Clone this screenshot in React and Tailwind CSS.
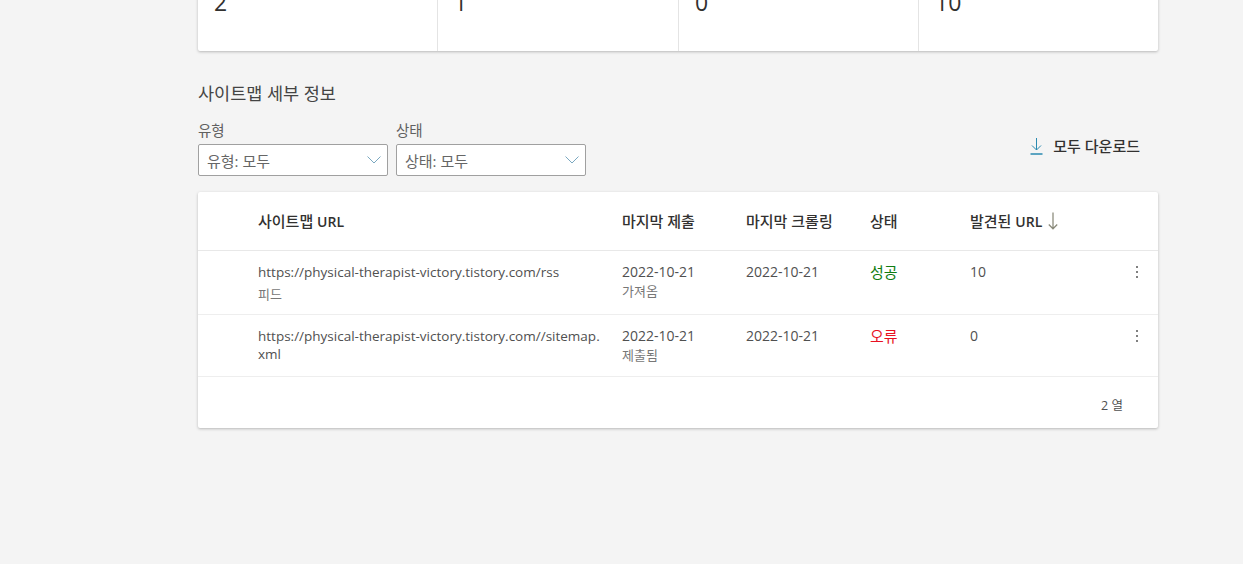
const FONT = "font-['Open_Sans','Noto_Sans_CJK_KR',sans-serif]";

const stats = ['2', '1', '0', '10'];

const rows = [
  { id: 'rss', url: 'https://physical-therapist-victory.tistory.com/rss', sub: '피드', submitted: '2022-10-21', note: '가져옴', crawled: '2022-10-21', status: '성공', color: 'text-[#107c10]', found: '10', h: 'h-[64px]' },
  { id: 'sitemap', url: <>https://physical-therapist-victory.tistory.com//sitemap.<wbr />xml</>, submitted: '2022-10-21', note: '제출됨', crawled: '2022-10-21', status: '오류', color: 'text-[#e81123]', found: '0', h: 'h-[62px]' },
];

function Filter({ label, value }) {
  return (
    <div className="w-[190px]">
      <div className="text-[14.5px] leading-[20px] text-[#606060] mb-[3px]">{label}</div>
      <div className="h-[32px] bg-white border border-[#a0a0a0] rounded-[2px] flex items-center justify-between pl-[8px] pr-[6px] text-[15px] text-[#666]">
        <span className="pt-[2px]">{value}</span>
        <svg width="14" height="8" viewBox="0 0 14 8" fill="none" stroke="#7aa8c0" strokeWidth="1">
          <path d="M0.5 0.5 L7 7 L13.5 0.5" />
        </svg>
      </div>
    </div>
  );
}

function Kebab() {
  return (
    <div className="flex flex-col gap-[3px] items-center w-[2px]">
      <i className="block w-[2px] h-[2px] bg-[#808080]" />
      <i className="block w-[2px] h-[2px] bg-[#808080]" />
      <i className="block w-[2px] h-[2px] bg-[#808080]" />
    </div>
  );
}

export default function App() {
  return (
    <div className={`${FONT} h-[564px] overflow-hidden bg-[#f4f4f4] pl-[198px] text-[#323130]`}>
      <div className="w-[960px] -mt-[49px]">
        <div className="grid grid-cols-[239px_241px_240px_240px] h-[100px] bg-white rounded-[2px] shadow-[0_1px_3px_rgba(0,0,0,0.25)]">
          {stats.map((n, i) => (
            <div key={i} className={`pl-[16px] pt-[38px] text-[23px] leading-[26px] ${i > 0 ? 'border-l border-[#e4e4e4]' : ''}`}>{n}</div>
          ))}
        </div>

        <h2 className="mt-[31px] text-[17.5px] leading-[22px] font-normal text-[#444]">사이트맵 세부 정보</h2>

        <div className="mt-[17px] flex items-start justify-between">
          <div className="flex gap-[8px]">
            <Filter label="유형" value="유형: 모두" />
            <Filter label="상태" value="상태: 모두" />
          </div>
          <div className="flex items-center gap-[10px] mt-[15px] pr-[18px] text-[15px] leading-[20px] font-medium text-[#323130]">
            <svg width="13" height="17" viewBox="0 0 13 17" fill="none" stroke="#2a8ab0" strokeWidth="1">
              <path d="M6.5 0 V12 M2 7.5 L6.5 12 L11 7.5" />
              <path d="M0.5 16 H12.5" strokeWidth="1.5" />
            </svg>
            <span>모두 다운로드</span>
          </div>
        </div>

        <div className="mt-[16px] bg-white rounded-[2px] shadow-[0_1px_3px_rgba(0,0,0,0.25)]">
          <div className="h-[59px] flex items-center pl-[60px] text-[15px] font-medium border-b border-[#e8e8e8]">
            <div className="w-[364px]">사이트맵 <span className="text-[14px] font-semibold">URL</span></div>
            <div className="w-[124px]">마지막 제출</div>
            <div className="w-[124px]">마지막 크롤링</div>
            <div className="w-[100px]">상태</div>
            <div className="flex items-center gap-[6px]">
              <span>발견된 <span className="text-[14px] font-semibold">URL</span></span>
              <svg width="10" height="18" viewBox="0 0 10 18" fill="none" stroke="#8a8a7a" strokeWidth="1.25">
                <path d="M5 0.5 V16.5 M0.8 12.5 L5 16.8 L9.2 12.5" />
              </svg>
            </div>
          </div>

          {rows.map((r) => (
            <div key={r.id} className={`${r.h} flex pl-[60px] pt-[11px] text-[14px] leading-[20px] text-[#505050] border-b border-[#eeeeee]`}>
              <div className="w-[364px] pr-[20px]">
                <div className="text-[13.5px] leading-[18px] mt-[1px]">{r.url}</div>
                {r.sub && <div className="text-[13px] leading-[16px] mt-[5px] text-[#777]">{r.sub}</div>}
              </div>
              <div className="w-[124px]">
                <div>{r.submitted}</div>
                <div className="text-[13px] leading-[16px] mt-[1px] text-[#777]">{r.note}</div>
              </div>
              <div className="w-[124px]">{r.crawled}</div>
              <div className={`w-[100px] text-[15px] ${r.color}`}>{r.status}</div>
              <div className="w-[166px]">{r.found}</div>
              <div className="pt-[4px]"><Kebab /></div>
            </div>
          ))}

          <div className="h-[51px] flex items-center justify-end pr-[35px] pt-[7px] text-[12.5px] text-[#505050]">2 열</div>
        </div>
      </div>
    </div>
  );
}
